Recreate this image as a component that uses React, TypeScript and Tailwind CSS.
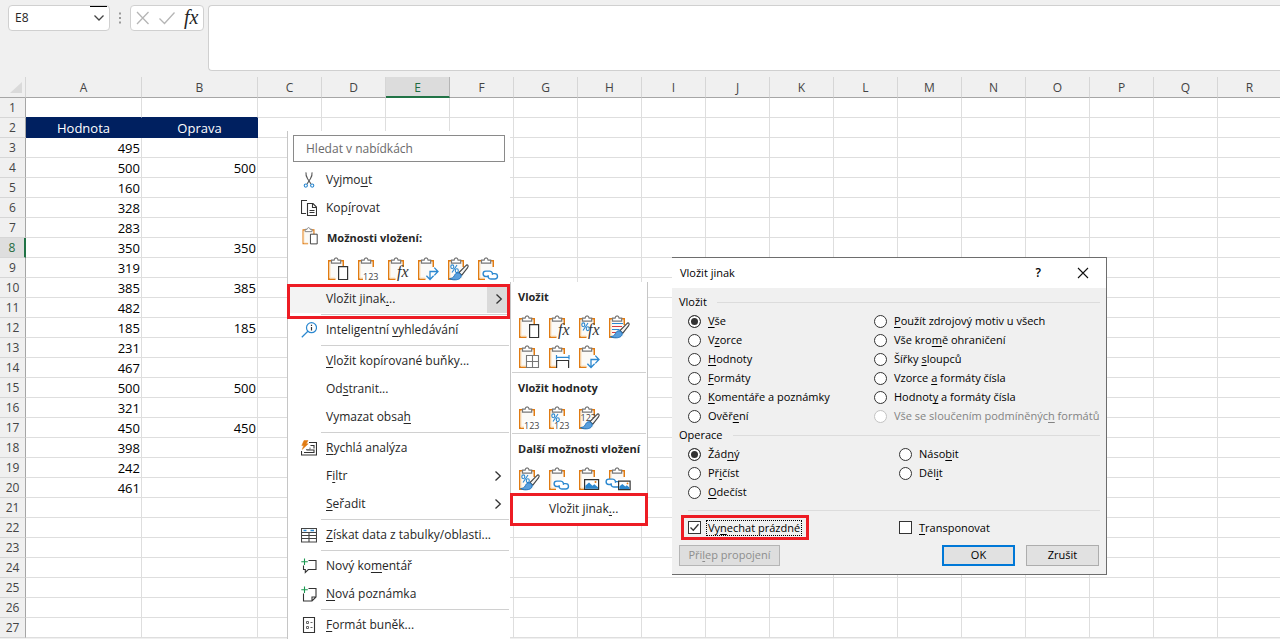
import React from 'react';

const columns = ['A', 'B', 'C', 'D', 'E', 'F', 'G', 'H', 'I', 'J', 'K', 'L', 'M', 'N', 'O', 'P', 'Q', 'R'];

const values: Record<number, [string, string]> = {
  2: ['Hodnota', 'Oprava'],
  3: ['495', ''],
  4: ['500', '500'],
  5: ['160', ''],
  6: ['328', ''],
  7: ['283', ''],
  8: ['350', '350'],
  9: ['319', ''],
  10: ['385', '385'],
  11: ['482', ''],
  12: ['185', '185'],
  13: ['231', ''],
  14: ['467', ''],
  15: ['500', '500'],
  16: ['321', ''],
  17: ['450', '450'],
  18: ['398', ''],
  19: ['242', ''],
  20: ['461', ''],
};

const rows = Array.from({ length: 27 }, (_, i) => i + 1);

// "&" marks the access key, which is underlined
const Mnemonic: React.FC<{ text: string }> = ({ text }) => {
  const at = text.indexOf('&');
  if (at < 0) return <span>{text}</span>;
  return (
    <span>
      {text.slice(0, at)}
      <u className="underline-offset-2">{text[at + 1]}</u>
      {text.slice(at + 2)}
    </span>
  );
};

/* ---------- icons ---------- */

const Chevron: React.FC<{ className?: string }> = ({ className }) => (
  <svg viewBox="0 0 8 12" className={className} fill="none" stroke="#333" strokeWidth="1.3">
    <path d="M1.5 1.5L6.3 6L1.5 10.5" />
  </svg>
);

type PasteKind =
  | 'paste' | 'values' | 'formulas' | 'transpose' | 'format' | 'link' | 'formulasNumber'
  | 'source' | 'noBorders' | 'widths' | 'valuesNumber' | 'valuesSource' | 'picture' | 'linkedPicture';

const Brush = () => (
  <g>
    <path d="M21.8 8.2c.6.7.4 1.8-.3 2.7l-5.700 7.300l-2.800-2.600l6.600-6.700c.7-.8 1.500-1.300 2.200-.7z" fill="#f4f4f4" stroke="#444" strokeWidth="1.1" />
    <path d="M12 15.800c1.700.1 3.200 1.500 3.200 3.100c0 2.500-2.900 3.900-6 3.900c-2.300.1-4.400-.3-5.700-1.200c2.400-.2 3.900-1 4.800-2.900c.8-1.700 1.900-3 3.700-2.900z" fill="#5a9fdc" stroke="#1e74c0" strokeWidth="1" />
  </g>
);

const Links: React.FC<{ x?: number; y?: number }> = ({ x = 0, y = 0 }) => (
  <g transform={`translate(${x} ${y})`} fill="none" stroke="#2b88d0" strokeWidth="1.4">
    <path d="M12.500 19.500h-2.700a2.700 2.700 0 0 1 0-5.400h4a2.700 2.700 0 0 1 2.500 3.700" />
    <path d="M16.300 16.600h2.500a2.700 2.700 0 0 1 0 5.400h-4a2.700 2.700 0 0 1-2.500-3.700" />
  </g>
);

const PasteIcon: React.FC<{ kind: PasteKind; size?: number }> = ({ kind, size = 24 }) => (
  <svg viewBox="0 0 24 24" width={size} height={size} fill="none" className="overflow-visible">
    <path d="M3 4h14.5v18H3z" fill="#fbfaf8" />
    <path d="M7 3.75H2.75v18.5H9.5M14.5 3.75h2.75V10" stroke="#e07b12" strokeWidth="1.5" />
    <path d="M4 5v16h5" stroke="#fbe0bb" strokeWidth="1" />
    <path d="M5.5 6.2V3.1h2.6c.2-1.4 1-2.3 2-2.3s1.800.9 2 2.300h2.600v3.100z" fill="#fff" stroke="#777" strokeWidth="1.2" />
    {kind === 'paste' && <path d="M12.600 9.600h9v12.900h-9z" fill="#fff" stroke="#333" strokeWidth="1.200" />}
    {(kind === 'values' || kind === 'valuesNumber') && (
      <g>
        <path d="M7 15h16v8.500H7z" fill="#fff" />
        <text x="7" y="22.500" fontSize="9" fill="#444" className="font-['Open_Sans',sans-serif]">123</text>
      </g>
    )}
    {kind === 'valuesSource' && (
      <text x="3.500" y="15" fontSize="9" fill="#444" className="font-['Open_Sans',sans-serif]">123</text>
    )}
    {(kind === 'formulas' || kind === 'formulasNumber') && (
      <g>
        <path d="M12 11h11v12H11z" fill="#fff" />
        <text x="11" y="20" fontSize="16" fontStyle="italic" fill="#333" className="font-['Liberation_Serif',serif]">fx</text>
      </g>
    )}
    {(kind === 'format' || kind === 'formulasNumber' || kind === 'valuesNumber') && (
      <g stroke="#2b88d0" strokeWidth="1.100">
        <path d="M11 8L6 15.500" />
        <ellipse cx="6.300" cy="9.800" rx="1.500" ry="1.900" />
        <ellipse cx="10.800" cy="13.700" rx="1.500" ry="1.900" />
      </g>
    )}
    {kind === 'transpose' && (
      <g>
        <path d="M14 11h9v12H14z" fill="#fff" />
        <path d="M14 22.500v-8h8M18.300 10.600l3.700 3.900l-3.700 3.900M10.400 18.800l3.600 3.700l3.600-3.700" stroke="#2b88d0" strokeWidth="1.300" />
      </g>
    )}
    {kind === 'source' && (
      <g strokeWidth="1.200">
        <path d="M5 8.500h11M5 14.500h7.500" stroke="#2b88d0" />
        <path d="M5 11.500h10M5 17.500h4" stroke="#d83b3b" />
      </g>
    )}
    {(kind === 'format' || kind === 'source' || kind === 'valuesSource') && <Brush />}
    {kind === 'link' && (
      <g>
        <path d="M9 13h14v10H9z" fill="#fff" />
        <Links />
      </g>
    )}
    {kind === 'noBorders' && (
      <path d="M9.500 10.500h12v12h-12zM15.500 10.500v12M9.500 16.500h12" fill="#fff" stroke="#777" strokeWidth="1.100" />
    )}
    {kind === 'widths' && (
      <g>
        <path d="M9 9h14v14H9z" fill="#fff" />
        <path d="M9.600 23v-7.500h12V23" stroke="#333" strokeWidth="1.200" />
        <path d="M9.500 12.300h12.500M9.500 10v4.500M22 10v4.500" stroke="#2b88d0" strokeWidth="1.200" />
      </g>
    )}
    {kind === 'picture' && (
      <g>
        <path d="M7.600 12.600h14v9.800h-14z" fill="#fff" stroke="#333" strokeWidth="1.200" />
        <path d="M8.300 21.700v-3l3.700-3.200l3.500 3.200l1.800-1.500l3.700 3v1.500z" fill="#2b88d0" />
        <circle cx="18.500" cy="15" r="1" fill="#e07b12" />
      </g>
    )}
    {kind === 'linkedPicture' && (
      <g>
        <path d="M0 12h24v11H0z" fill="#fff" />
        <Links x={-8} y={-2} />
        <path d="M11.600 14.100h11.500v8.500h-11.500z" fill="#fff" stroke="#333" strokeWidth="1.200" />
        <path d="M12.300 22v-2.500l3-2.500l3 2.500l1.500-1.200l2.600 2.200v1.500z" fill="#2b88d0" />
        <circle cx="20.500" cy="16.400" r=".9" fill="#e07b12" />
      </g>
    )}
  </svg>
);

const icons: Record<string, React.ReactNode> = {
  cut: (
    <g strokeWidth="1.100">
      <path d="M5 .3c-.4 2.500.4 4.500 1.600 6.500L10 12M11 .3c.4 2.500-.4 4.500-1.600 6.500L6 12" stroke="#555" />
      <circle cx="4.800" cy="13.600" r="1.600" stroke="#2b88d0" />
      <circle cx="11.200" cy="13.600" r="1.600" stroke="#2b88d0" />
    </g>
  ),
  copy: (
    <g stroke="#333" strokeWidth="1.100">
      <path d="M5 13.500H.5V.5H6" />
      <path d="M6.500 3.500h5.500l3.500 3.500v8.500h-9z" fill="#fff" />
      <path d="M11.500 3.800v3.700h3.600M8.500 10.500h5M8.500 12.500h5" />
    </g>
  ),
  search: (
    <g strokeWidth="1.200" stroke="#2b88d0">
      <circle cx="10.500" cy="5.700" r="5" />
      <path d="M6.900 9.300L.8 15.200" />
      <path d="M10.500 5v3.500M10.500 2.800V4" stroke="#333" />
    </g>
  ),
  analysis: (
    <g strokeWidth="1.100" stroke="#333">
      <path d="M8 2.500h7.500v12.500H.5v-4" />
      <path d="M9.500 5.500h3.500v3M3 12.500h10v-2.500H5.500" />
      <path d="M5 9.500h4V7.500" stroke="#777" />
      <path d="M3 .5h4L5.200 3.800h2L1.200 9.500l1.500-4H.8z" fill="#e07b12" stroke="#e07b12" strokeWidth=".5" />
    </g>
  ),
  table: (
    <g strokeWidth="1.100" stroke="#444">
      <path d="M.5 1.500h15v13.500H.5zM.5 5.500h15M.5 8.500h15M.5 11.500h15M8 5.500v9.500" />
      <path d="M2.500 3.500h3M9.500 3.500h3.500" stroke="#2b88d0" strokeWidth="1.600" />
    </g>
  ),
  comment: (
    <g strokeWidth="1.100">
      <path d="M7.500 2.500h7.500v9H7.300l-3 3v-3H2.500V7.500" stroke="#333" />
      <path d="M3.500.5v6.500M.3 3.700h6.500" stroke="#1a9850" />
    </g>
  ),
  note: (
    <g strokeWidth="1.100">
      <path d="M7.500 2.500h7.500v8.500l-4 4H2.500V7.500M11 15v-4h4" stroke="#333" />
      <path d="M3.500.5v6.500M.3 3.700h6.500" stroke="#1a9850" />
    </g>
  ),
  cells: (
    <g strokeWidth="1.100" stroke="#333">
      <path d="M2.500.5h11v15h-11z" />
      <path d="M5.500 4.500h2v2h-2zM5.500 9.500h2v2h-2z" stroke="#666" strokeWidth="1" />
      <path d="M9.500 5.500h2M9.500 10.500h2" stroke="#666" />
    </g>
  ),
};

/* ---------- menus ---------- */

type MenuItemProps = { label: string; icon?: string; arrow?: boolean };

const MenuItem: React.FC<MenuItemProps> = ({ label, icon, arrow }) => (
  <button type="button" className="flex h-7 w-full items-center text-left">
    <span className="w-[38px] shrink-0 pl-[13px]">
      {icon && (
        <svg viewBox="0 0 16 16" width="16" height="16" fill="none">
          {icons[icon]}
        </svg>
      )}
    </span>
    <span className="flex-1 whitespace-nowrap">
      <Mnemonic text={label} />
    </span>
    {arrow && <Chevron className="mr-2 h-3 w-2" />}
  </button>
);

const Separator = () => <div className="my-px mr-px ml-[33px] h-px bg-[#d0d0d0]" />;

const PasteRow: React.FC<{ kinds: PasteKind[] }> = ({ kinds }) => (
  <div className="flex">
    {kinds.map((kind) => (
      <button key={kind} type="button" aria-label={kind} className="flex h-[30px] w-[30px] items-center justify-center">
        <PasteIcon kind={kind} />
      </button>
    ))}
  </div>
);

const ContextMenu = () => (
  <div className="absolute top-[131px] left-[287px] w-[223px] border-l border-[#c6c6c6] bg-white pt-1 text-xs text-[#262626]">
    <input
      aria-label="Hledat v nabídkách"
      placeholder="Hledat v nabídkách"
      className="mb-1 ml-[5px] block h-[27px] w-[212px] border border-[#8a8a8a] px-3 placeholder:text-[#6a6a6a]"
    />
    <MenuItem icon="cut" label="Vyjmo&ut" />
    <MenuItem icon="copy" label="Kop&írovat" />
    <div className="flex h-8 items-center text-[11px] font-bold">
      <span className="w-[39px] pb-1 pl-[13px]">
        <PasteIcon kind="paste" size={18} />
      </span>
      Možnosti vložení:
    </div>
    <div className="h-[31px] pl-[35px]">
      <PasteRow kinds={['paste', 'values', 'formulas', 'transpose', 'format', 'link']} />
    </div>
    <button type="button" className="relative flex h-7 w-full items-center bg-[#f3f3f3] pl-[38px] text-left">
      <span className="flex-1">
        <Mnemonic text="Vložit jinak&..." />
      </span>
      <span className="flex h-full w-[23px] items-center justify-center bg-[#dadada]">
        <Chevron className="h-3 w-2" />
      </span>
      <span className="absolute -top-px right-0 -bottom-[6px] -left-px z-10 border-[3px] border-[#ed1c24]" />
    </button>
    <Separator />
    <MenuItem icon="search" label="Inteligentní &vyhledávání" />
    <Separator />
    <MenuItem label="&Vložit kopírované buňky..." />
    <MenuItem label="Od&stranit..." />
    <MenuItem label="Vymazat obsa&h" />
    <Separator />
    <MenuItem icon="analysis" label="&Rychlá analýza" />
    <MenuItem label="F&iltr" arrow />
    <MenuItem label="&Seřadit" arrow />
    <Separator />
    <MenuItem icon="table" label="&Získat data z tabulky/oblasti..." />
    <Separator />
    <MenuItem icon="comment" label="Nový ko&mentář" />
    <MenuItem icon="note" label="&Nová poznámka" />
    <Separator />
    <MenuItem icon="cells" label="&Formát buněk..." />
  </div>
);

const SubHeading: React.FC<{ children: React.ReactNode }> = ({ children }) => (
  <h3 className="flex h-[30px] items-center pl-1 text-[11px] font-bold whitespace-nowrap">{children}</h3>
);

const PasteSubmenu = () => (
  <div className="absolute top-[282px] left-[510px] w-[138px] border-x border-[#c6c6c6] bg-white text-xs text-[#262626]">
    <div className="px-[3px]">
      <SubHeading>Vložit</SubHeading>
      <PasteRow kinds={['paste', 'formulas', 'formulasNumber', 'source']} />
      <PasteRow kinds={['noBorders', 'widths', 'transpose']} />
    </div>
    <div className="mx-px h-px bg-[#d0d0d0]" />
    <div className="px-[3px]">
      <SubHeading>Vložit hodnoty</SubHeading>
      <PasteRow kinds={['values', 'valuesNumber', 'valuesSource']} />
    </div>
    <div className="mx-px h-px bg-[#d0d0d0]" />
    <div className="px-[3px]">
      <SubHeading>Další možnosti vložení</SubHeading>
      <PasteRow kinds={['format', 'link', 'picture', 'linkedPicture']} />
    </div>
    <button type="button" className="relative flex h-[30px] w-full items-center pl-[38px]">
      <Mnemonic text="Vložit jinak&..." />
      <span className="absolute -inset-x-px -top-px -bottom-[2px] border-[3px] border-[#ed1c24]" />
    </button>
  </div>
);

/* ---------- dialog ---------- */

type OptionProps = { name: string; label: string; checked?: boolean; disabled?: boolean };

const Radio: React.FC<OptionProps> = ({ name, label, checked, disabled }) => (
  <label className={`flex h-[19px] items-center gap-[7px] whitespace-nowrap ${disabled ? 'text-[#838383]' : ''}`}>
    <input
      type="radio"
      name={name}
      defaultChecked={checked}
      disabled={disabled}
      className="h-[13px] w-[13px] shrink-0 appearance-none rounded-full border border-[#333] bg-white checked:bg-[#333] checked:shadow-[inset_0_0_0_2px_white] disabled:border-[#c3c3c3]"
    />
    <Mnemonic text={label} />
  </label>
);

const Check: React.FC<{ label: string; checked?: boolean; focused?: boolean }> = ({ label, checked, focused }) => (
  <label
    className={`flex h-[19px] items-center gap-[5px] whitespace-nowrap ${
      focused ? '-mx-1 px-1 outline-3 outline-[#ed1c24]' : ''
    }`}
  >
    <span className="relative flex">
      <input type="checkbox" defaultChecked={checked} className="h-[13px] w-[13px] appearance-none border border-[#333] bg-white" />
      {checked && (
        <svg viewBox="0 0 13 13" className="absolute inset-0 h-[13px] w-[13px]" fill="none" stroke="#333" strokeWidth="1.300">
          <path d="M2.500 6.500l2.800 2.800l5.200-6" />
        </svg>
      )}
    </span>
    <span className={`border px-px leading-[14px] ${focused ? 'border-dotted border-black' : 'border-transparent'}`}>
      <Mnemonic text={label} />
    </span>
  </label>
);

const Legend: React.FC<{ children: React.ReactNode }> = ({ children }) => (
  <div className="flex h-[19px] items-center gap-[10px] pr-[6px] pl-[7px]">
    {children}
    <div className="h-px flex-1 bg-[#dcdcdc]" />
  </div>
);

const PasteDialog = () => (
  <div
    role="dialog"
    aria-label="Vložit jinak"
    className="absolute top-[257px] left-[672px] w-[435px] border-y border-r border-[#6d6d6d] bg-[#f0f0f0] text-[11px] text-black"
  >
    <div className="flex h-[30px] items-center bg-white pr-[17px] pl-2">
      <h2 className="flex-1">Vložit jinak</h2>
      <button type="button" className="mr-9 text-xs font-semibold">?</button>
      <button type="button" aria-label="Zavřít">
        <svg viewBox="0 0 12 12" width="12" height="12" stroke="#111" strokeWidth="1.100">
          <path d="M1 1l10 10M11 1L1 11" />
        </svg>
      </button>
    </div>
    <div className="pt-[5px] pb-2">
      <Legend>Vložit</Legend>
      <div className="flex pl-4">
        <div className="w-[186px]">
          <Radio name="paste" label="&Vše" checked />
          <Radio name="paste" label="V&zorce" />
          <Radio name="paste" label="&Hodnoty" />
          <Radio name="paste" label="&Formáty" />
          <Radio name="paste" label="&Komentáře a poznámky" />
          <Radio name="paste" label="Ověř&ení" />
        </div>
        <div>
          <Radio name="paste" label="&Použít zdrojový motiv u všech" />
          <Radio name="paste" label="Vše kro&mě ohraničení" />
          <Radio name="paste" label="Šířky &sloupců" />
          <Radio name="paste" label="Vzorce &a formáty čísla" />
          <Radio name="paste" label="Hodnot&y a formáty čísla" />
          <Radio name="paste" label="Vše se sloučením podmíněnýc&h formátů" disabled />
        </div>
      </div>
      <Legend>Operace</Legend>
      <div className="flex pl-4">
        <div className="w-[211px]">
          <Radio name="operation" label="Žád&ný" checked />
          <Radio name="operation" label="Př&ičíst" />
          <Radio name="operation" label="&Odečíst" />
        </div>
        <div>
          <Radio name="operation" label="Náso&bit" />
          <Radio name="operation" label="Děl&it" />
        </div>
      </div>
      <div className="mt-2 mr-[6px] ml-4 h-px bg-[#dcdcdc]" />
      <div className="mt-[7px] flex pl-4">
        <div className="flex w-[211px]">
          <Check label="Vy&nechat prázdné" checked focused />
        </div>
        <Check label="&Transponovat" />
      </div>
      <div className="mt-2 flex gap-[11px] pr-[7px] pl-[7px]">
        <button type="button" disabled className="h-[21px] w-[101px] border border-[#b5b5b5] bg-[#dedede] text-[#8d8d8d]">
          <Mnemonic text="Při&lep propojení" />
        </button>
        <button type="button" className="ml-auto h-[21px] w-[73px] border-2 border-[#0078d7] bg-[#e1e1e1]">OK</button>
        <button type="button" className="h-[21px] w-[73px] border border-[#adadad] bg-[#e1e1e1]">Zrušit</button>
      </div>
    </div>
  </div>
);

/* ---------- sheet ---------- */

const FormulaBar = () => (
  <div className="flex h-[77px] items-start pt-[5px] pl-2 text-xs text-[#262626]">
    <div className="relative flex h-[26px] w-[102px] items-center rounded border border-[#d0d0d0] bg-white">
      <input aria-label="Pole názvů" defaultValue="E8" className="w-full bg-transparent pl-[6px]" />
      <svg viewBox="0 0 12 8" className="absolute right-1 h-2 w-3" fill="none" stroke="#444" strokeWidth="1.300">
        <path d="M1.500 1.500L6 6l4.500-4.500" />
      </svg>
      <span className="absolute top-0 right-[2px] h-px w-[17px] bg-black" />
    </div>
    <svg viewBox="0 0 4 14" className="mx-2 mt-[6px] h-[14px] w-1" fill="#999">
      <path d="M1 1.500h2v2H1zM1 6h2v2H1zM1 10.500h2v2H1z" />
    </svg>
    <div className="flex h-[26px] w-[74px] items-center rounded border border-[#d0d0d0] bg-white px-[5px]">
      <button type="button" aria-label="Zrušit úpravy">
        <svg viewBox="0 0 14 14" width="14" height="14" fill="none" stroke="#b5b5b5" strokeWidth="1.300">
          <path d="M1 1l11.500 12M12.500 1L1 13" />
        </svg>
      </button>
      <button type="button" aria-label="Zadat" className="ml-2">
        <svg viewBox="0 0 18 14" width="18" height="14" fill="none" stroke="#b5b5b5" strokeWidth="1.300">
          <path d="M1.500 7.500l5 5L16.500 1.500" />
        </svg>
      </button>
      <button type="button" className="ml-2 pb-[2px] font-['Liberation_Serif',serif] text-xl leading-5 italic">fx</button>
    </div>
    <textarea aria-label="Řádek vzorců" className="ml-1 h-[66px] flex-1 resize-none rounded-l border border-r-0 border-[#d0d0d0] bg-white" />
  </div>
);

const Sheet = () => (
  <table className="w-full table-fixed border-separate border-spacing-0 text-[13px] text-black">
    <colgroup>
      <col className="w-[26px]" />
      {columns.map((c) => (
        <col key={c} className={c < 'C' ? 'w-[116px]' : 'w-16'} />
      ))}
    </colgroup>
    <thead>
      <tr className="h-[21px] text-xs text-[#444]">
        <td className="border-r border-b border-r-[#d6d6d6] border-b-[#a6a6a6] p-0">
          <svg viewBox="0 0 12 11" className="ml-[10px] h-[11px] w-3" fill="#dadada">
            <path d="M12 0v11H0z" />
          </svg>
        </td>
        {columns.map((c) => (
          <th
            key={c}
            className={`border-r p-0 pt-[2px] font-normal ${
              c === 'E'
                ? 'border-b-2 border-r-[#b5b5b5] border-b-[#217346] bg-[#dcdcdc] text-[#1e6b41]'
                : 'border-b border-r-[#d6d6d6] border-b-[#a6a6a6]'
            }`}
          >
            {c}
          </th>
        ))}
      </tr>
    </thead>
    <tbody>
      {rows.map((r) => (
        <tr key={r} className="h-5 bg-white leading-[18px]">
          <th
            className={`border-b border-b-[#d6d6d6] p-0 pt-px text-xs leading-[18px] font-normal ${
              r === 8
                ? 'border-r-2 border-r-[#217346] bg-[#dedede] text-[#1e6b41]'
                : 'border-r border-r-[#a6a6a6] bg-[#f0f0f0] text-[#444]'
            }`}
          >
            {r}
          </th>
          {columns.map((c, i) => (
            <td
              key={c}
              className={`border-r border-b p-0 ${
                r === 2 && i < 2
                  ? 'border-[#002060] bg-[#002060] text-center text-white'
                  : r === 1 && i < 2
                    ? 'border-r-[#dedede] border-b-[#002060]'
                    : 'border-[#dedede] pr-px text-right'
              }`}
            >
              {i < 2 && values[r] ? values[r][i] : ''}
            </td>
          ))}
        </tr>
      ))}
    </tbody>
  </table>
);

const App: React.FC = () => (
  <div className="relative h-screen overflow-hidden bg-[#f0f0f0] font-['Open_Sans','Noto_Sans',sans-serif]">
    <FormulaBar />
    <Sheet />
    <ContextMenu />
    <PasteSubmenu />
    <PasteDialog />
  </div>
);

export default App;
